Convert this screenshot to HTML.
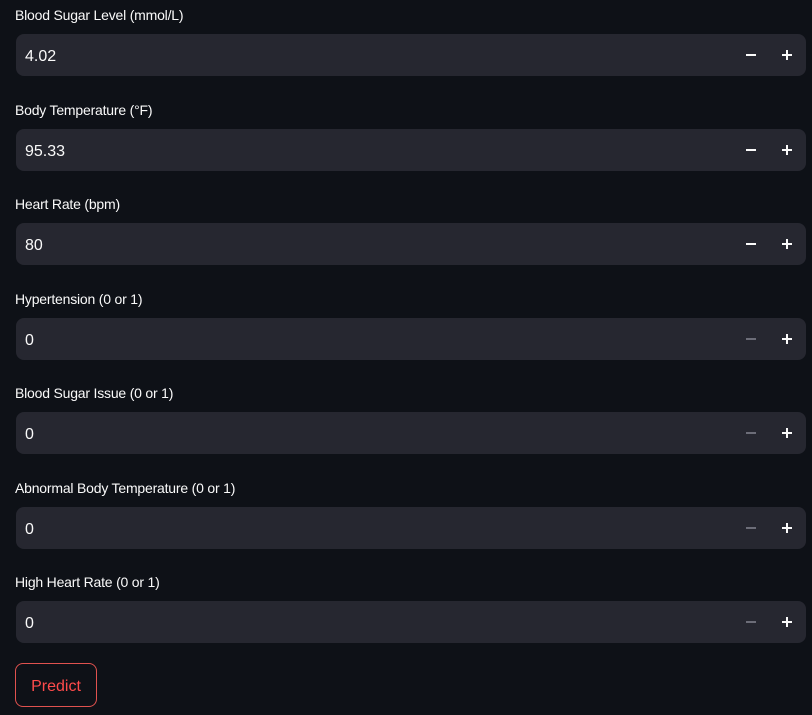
<!DOCTYPE html>
<html><head><style>
body{margin:0;background:#0e1117;width:812px;height:715px;overflow:hidden;font-family:"Liberation Sans",sans-serif;position:relative}
.l{position:absolute;left:15px;color:#fafafa;font-size:14px;letter-spacing:-0.2px}
.i{position:absolute;left:16px;width:790px;height:42px;background:#262730;border-radius:8px}
.v{position:absolute;left:9px;top:14px;color:#fafafa;font-size:16px}
.m{position:absolute;left:730px;top:20px;width:10px;height:2px;background:#fafafa}
.m.d{background:#6c6d78}
.p{position:absolute;left:766px;top:16px;width:10px;height:10px}
.p:before{content:"";position:absolute;left:0;top:4px;width:10px;height:2px;background:#fafafa}
.p:after{content:"";position:absolute;left:4px;top:0;width:2px;height:10px;background:#fafafa}
.b{position:absolute;left:15px;top:663px;width:80px;height:42px;border:1px solid #e0524f;border-radius:8px;color:#ff4b4b;font-size:16px;text-align:center;line-height:45px}
</style></head><body>
<div class="l" style="top:7px">Blood Sugar Level (mmol/L)</div>
<div class="i" style="top:34px"><div class="v">4.02</div><div class="m"></div><div class="p"></div></div>
<div class="l" style="top:102px">Body Temperature (°F)</div>
<div class="i" style="top:129px"><div class="v">95.33</div><div class="m"></div><div class="p"></div></div>
<div class="l" style="top:196px">Heart Rate (bpm)</div>
<div class="i" style="top:223px"><div class="v">80</div><div class="m"></div><div class="p"></div></div>
<div class="l" style="top:291px">Hypertension (0 or 1)</div>
<div class="i" style="top:318px"><div class="v">0</div><div class="m d"></div><div class="p"></div></div>
<div class="l" style="top:385px">Blood Sugar Issue (0 or 1)</div>
<div class="i" style="top:412px"><div class="v">0</div><div class="m d"></div><div class="p"></div></div>
<div class="l" style="top:480px">Abnormal Body Temperature (0 or 1)</div>
<div class="i" style="top:507px"><div class="v">0</div><div class="m d"></div><div class="p"></div></div>
<div class="l" style="top:574px">High Heart Rate (0 or 1)</div>
<div class="i" style="top:601px"><div class="v">0</div><div class="m d"></div><div class="p"></div></div>
<div class="b">Predict</div>
</body></html>
